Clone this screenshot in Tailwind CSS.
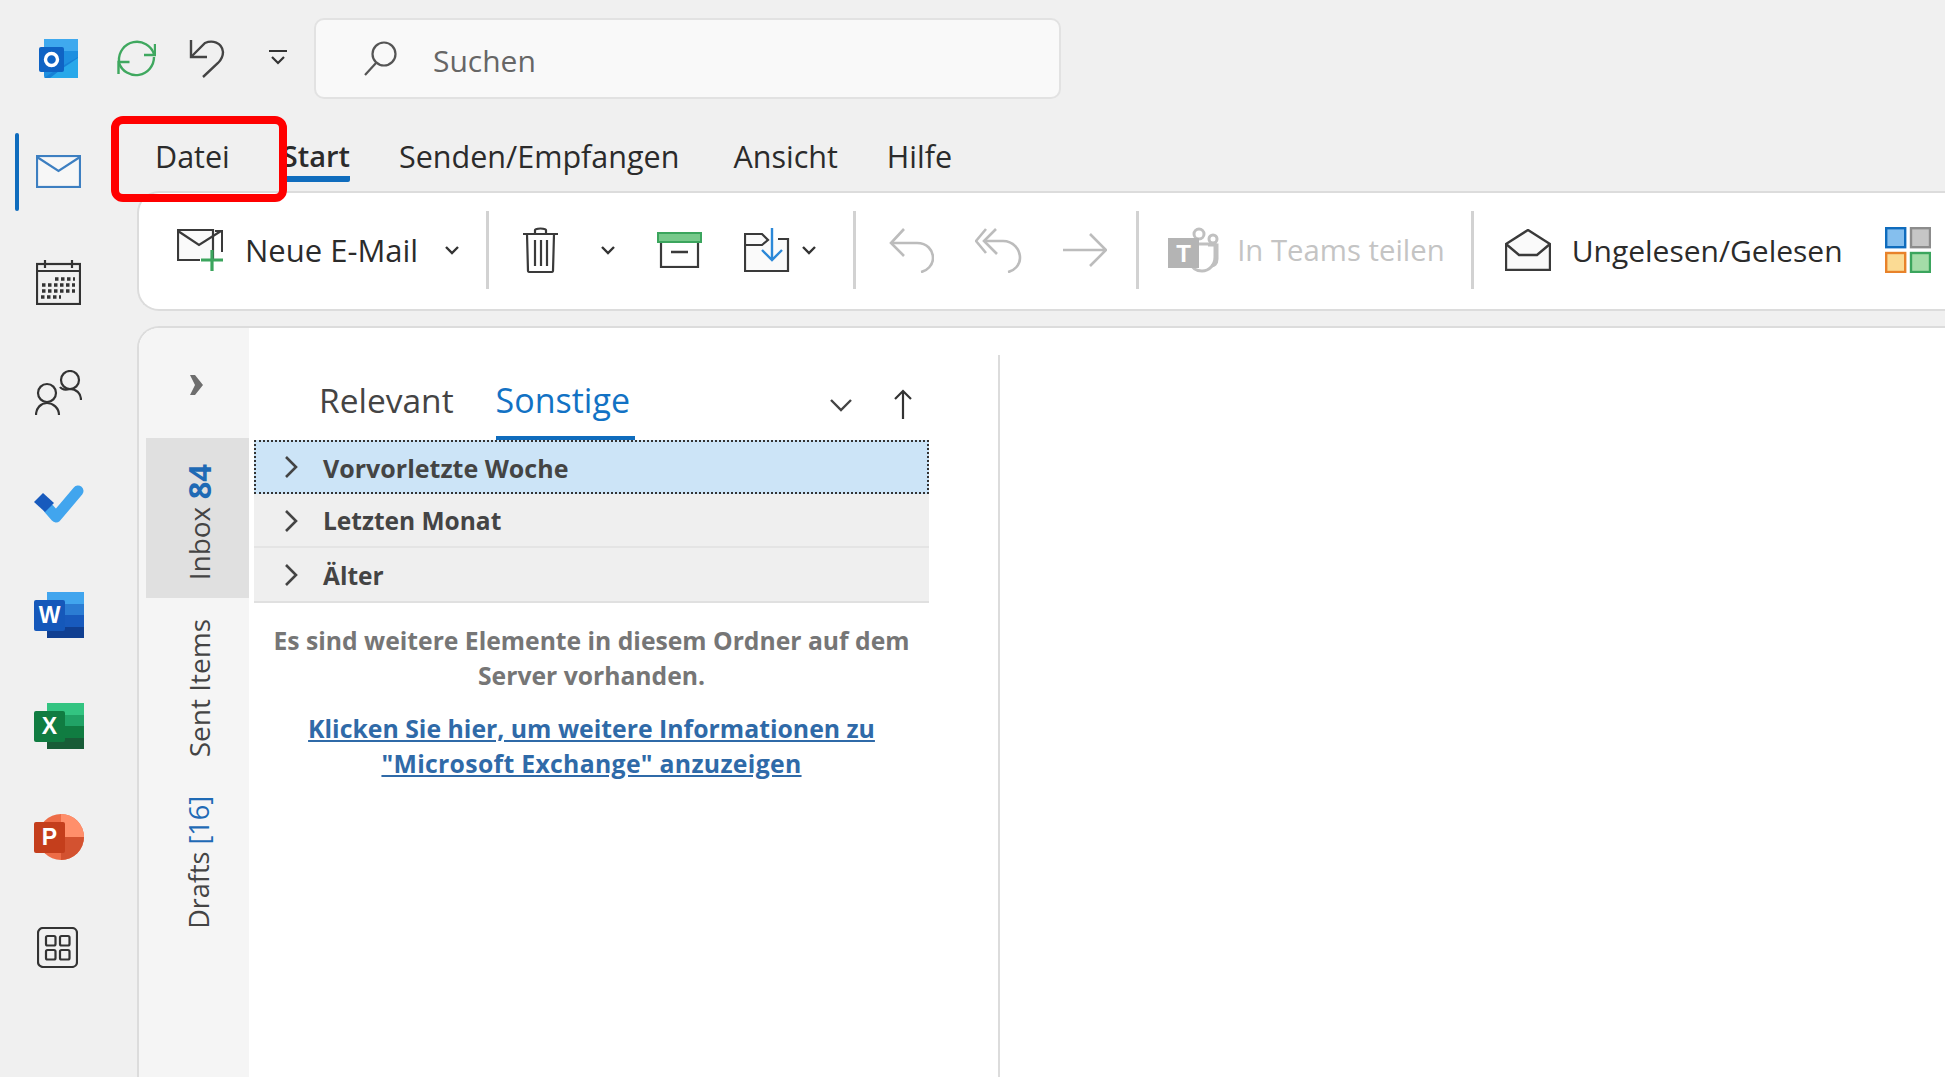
<!DOCTYPE html>
<html lang="de"><head><meta charset="utf-8">
<script src="https://cdn.jsdelivr.net/npm/@tailwindcss/browser@4"></script>
<title>Outlook</title></head>
<body class="m-0 h-[1077px] w-[1945px] overflow-hidden bg-[#f0f0f0] text-[#2b2b2b] font-['Open_Sans','Noto_Sans',sans-serif] relative">

<!-- title row -->
<header class="flex h-[110px] items-center pt-[6px]">
  <svg class="ml-[39px] w-[39px] h-[39px]" viewBox="0 0 39 39"><rect x="5" y="0" width="34" height="39" rx="2" fill="#1e8fe0"/><rect x="5" y="0" width="34" height="12" fill="#3fa9ee"/><path d="M5 39h34V18L20 29z" fill="#1680d6"/><path d="M11 39h28V19L24 29z" fill="#28a8ea"/><rect x="0" y="8" width="25" height="25" rx="2" fill="#0f63c4"/><circle cx="12.500" cy="20.500" r="6" fill="none" stroke="#fff" stroke-width="3.400"/></svg>
  <svg class="ml-[39px] w-[39px] h-[39px]" viewBox="0 0 39 39" fill="none" stroke="#3fa85f" stroke-width="2.400"><path d="M2 22A18 18 0 0 1 37 15"/><path d="M37 18A18 18 0 0 1 2 24"/><path d="M38 5v11H27M1.500 35V23h11"/></svg>
  <svg class="ml-[33px] w-[36px] h-[39px]" viewBox="0 0 36 39" fill="none" stroke="#444" stroke-width="2.400"><path d="M2 1v17h16"/><path d="M3 17 16 4c7-3 17-1 18 9 0 5-2 8-5 11L14 38"/></svg>
  <svg class="ml-[44px] w-[18px] h-[18px]" viewBox="0 0 18 18" fill="none" stroke="#333" stroke-width="2.200"><path d="M0 2h18M3 8l6 6 6-6"/></svg>
  <div class="ml-[27px] flex h-[81px] w-[747px] items-center rounded-[10px] border-2 border-[#e2e2e2] bg-[#f9f9f9] pl-[48px]">
    <svg class="w-[33px] h-[36px]" viewBox="0 0 33 36" fill="none" stroke="#555" stroke-width="2.200"><circle cx="20" cy="14" r="11.500"/><path d="M12 23 1 35"/></svg>
    <span class="ml-[36px] pt-[5px] text-[30px] text-[#666]">Suchen</span>
  </div>
</header>

<div class="flex h-[967px]">
  <!-- app rail -->
  <nav class="w-[137px] shrink-0 flex flex-col pt-[5px] relative">
    <div class="absolute left-[15px] top-[23px] h-[78px] w-[4px] rounded bg-[#0f6cbd]"></div>
    <div class="h-[111px] flex items-center justify-center pr-[20px] pt-[1px]"><svg class="w-[45px] h-[33px]" viewBox="0 0 45 33" fill="#f7f7f7" stroke="#3d7fc1" stroke-width="2.200"><rect x="1" y="1" width="43" height="31"/><path d="M1 2l21.500 14L44 2" fill="none"/></svg></div>
    <div class="h-[111px] flex items-center justify-center pr-[20px]"><svg class="w-[45px] h-[46px]" viewBox="0 0 45 46" fill="none" stroke="#333" stroke-width="2.200"><rect x="1" y="5" width="43" height="40"/><path d="M9 1v8M36 1v8M1 12h43" /><path stroke-width="3.500" stroke-dasharray="3.500 2.500" d="M19 20h20M6 26h33M6 32h33M5 38h20"/></svg></div>
    <div class="h-[111px] flex items-center justify-center pr-[20px]"><svg class="w-[47px] h-[46px]" viewBox="0 0 47 46" fill="none" stroke="#333" stroke-width="2.200"><circle cx="35" cy="10" r="9"/><path d="M25 17c2 3 6 3 10 2 6 0 11 4 11 11"/><circle cx="12" cy="23" r="9"/><path d="M1 45c0-7 5-12 11-12s12 5 12 12"/></svg></div>
    <div class="h-[111px] flex items-center justify-center pr-[20px]"><svg class="w-[50px] h-[40px]" viewBox="0 0 50 40"><path d="M15 25l7 8L44 7" fill="none" stroke="#41a5ee" stroke-width="11" stroke-linecap="round" stroke-linejoin="round"/><path d="M0 18 9 9l11 10-9 9z" fill="#185abd"/></svg></div>
    <div class="h-[111px] flex items-center justify-center pr-[20px]"><svg class="w-[50px] h-[46px]" viewBox="0 0 50 46"><rect x="13" y="0" width="37" height="46" rx="2" fill="#2b7cd3"/><rect x="13" y="0" width="37" height="12" fill="#41a5ee"/><rect x="13" y="23" width="37" height="12" fill="#185abd"/><rect x="13" y="35" width="37" height="11" fill="#103f91"/><rect x="0" y="8" width="31" height="31" rx="2" fill="#1558ba"/><text x="15.500" y="31" text-anchor="middle" font-family="Liberation Sans" font-weight="700" font-size="23" fill="#fff">W</text></svg></div>
    <div class="h-[111px] flex items-center justify-center pr-[20px]"><svg class="w-[50px] h-[46px]" viewBox="0 0 50 46"><rect x="13" y="0" width="37" height="46" rx="2" fill="#21a366"/><rect x="13" y="0" width="37" height="12" fill="#33c481"/><rect x="13" y="23" width="37" height="12" fill="#107c41"/><rect x="13" y="35" width="37" height="11" fill="#185c37"/><rect x="0" y="8" width="31" height="31" rx="2" fill="#107c41"/><text x="15.500" y="31" text-anchor="middle" font-family="Liberation Sans" font-weight="700" font-size="23" fill="#fff">X</text></svg></div>
    <div class="h-[111px] flex items-center justify-center pr-[20px]"><svg class="w-[50px] h-[46px]" viewBox="0 0 50 46"><circle cx="27" cy="23" r="23" fill="#ed6c47"/><path d="M27 0a23 23 0 0 1 23 23H27z" fill="#ff8f6b"/><path d="M27 23h23a23 23 0 0 1-23 23z" fill="#d35230"/><rect x="0" y="8" width="31" height="31" rx="2" fill="#c43e1c"/><text x="15.500" y="31" text-anchor="middle" font-family="Liberation Sans" font-weight="700" font-size="23" fill="#fff">P</text></svg></div>
    <div class="h-[111px] flex items-center justify-center pr-[22px]"><svg class="w-[41px] h-[41px]" viewBox="0 0 41 41" fill="none" stroke="#333" stroke-width="2.200"><rect x="1" y="1" width="39" height="39" rx="5"/><rect x="9" y="9" width="9.500" height="9.500" rx="1.500"/><rect x="23" y="9" width="9.500" height="9.500" rx="1.500"/><rect x="9" y="23" width="9.500" height="9.500" rx="1.500"/><rect x="23" y="23" width="9.500" height="9.500" rx="1.500"/></svg></div>
  </nav>

  <div class="flex-1 min-w-0 flex flex-col">
    <!-- tabs -->
    <div class="h-[81px] flex items-start pt-[27px] pl-[18px] text-[30.500px] leading-[38px] whitespace-nowrap">
      <span>Datei</span>
      <span class="ml-[52px] h-[45px] border-b-[6px] border-[#0f6cbd] rounded-b-[2px] text-[29px] font-semibold">Start</span>
      <span class="ml-[49px]">Senden/Empfangen</span>
      <span class="ml-[54px]">Ansicht</span>
      <span class="ml-[49px]">Hilfe</span>
    </div>
    <!-- ribbon -->
    <div class="h-[120px] flex items-center bg-white border-y-2 border-l-2 border-[#dcdcdc] rounded-l-[22px] pl-[38px] pb-[2px] text-[30px] whitespace-nowrap overflow-hidden shrink-0">
      <svg class="w-[48px] h-[42px] shrink-0" viewBox="0 0 48 42" fill="none"><path d="M36 30V1H1v30h22" fill="#fafafa" stroke="#3a3a3a" stroke-width="2.200"/><path d="M1 2l21 14 22-14" stroke="#3a3a3a" stroke-width="2.200"/><rect x="38" y="1" width="8" height="2" fill="#3a3a3a"/><rect x="44" y="1" width="2" height="22" fill="#3a3a3a"/><path d="M35 21v21M24 31h22" stroke="#3ba55d" stroke-width="3.200"/></svg>
      <span class="ml-[20px] text-[31px]">Neue E-Mail</span>
      <svg class="ml-[27px] w-[14px] h-[9px] shrink-0" viewBox="0 0 14 9" fill="none" stroke="#333" stroke-width="2.400"><path d="M1 1l6 6 6-6"/></svg>
      <div class="ml-[27px] h-[78px] w-[3px] bg-[#d2d2d2] shrink-0"></div>
      <svg class="ml-[33px] w-[37px] h-[46px] shrink-0" viewBox="0 0 37 46" fill="none" stroke="#3a3a3a" stroke-width="2.200"><path d="M1 7h35M13 7V3c0-2 11-2 11 0v4M5 7l1 37c0 1 1 1 2 1h21c1 0 2 0 2-1l1-37"/><path d="M13 13v26M19 13v26M25 13v26"/></svg>
      <svg class="ml-[42px] w-[14px] h-[9px] shrink-0" viewBox="0 0 14 9" fill="none" stroke="#333" stroke-width="2.400"><path d="M1 1l6 6 6-6"/></svg>
      <svg class="ml-[42px] w-[45px] h-[36px] shrink-0" viewBox="0 0 45 36" fill="none"><rect x="4" y="9" width="37" height="26" fill="#fff" stroke="#3a3a3a" stroke-width="2.200"/><rect x="1" y="1" width="43" height="9" fill="#77c98b" stroke="#3ba55d" stroke-width="2"/><path d="M14 20h17" stroke="#3a3a3a" stroke-width="2.600"/></svg>
      <svg class="ml-[42px] w-[46px] h-[44px] shrink-0" viewBox="0 0 46 44" fill="none"><path d="M34 11h10v32H1V6h17l6 6-6 5H1" fill="#fafafa" stroke="#3a3a3a" stroke-width="2.200"/><path d="M28 0v31M18 22l10 10 10-10" stroke="#2b88d8" stroke-width="2.400"/></svg>
      <svg class="ml-[12px] w-[14px] h-[9px] shrink-0" viewBox="0 0 14 9" fill="none" stroke="#333" stroke-width="2.400"><path d="M1 1l6 6 6-6"/></svg>
      <div class="ml-[37px] h-[78px] w-[3px] bg-[#d2d2d2] shrink-0"></div>
      <svg class="ml-[33px] w-[45px] h-[46px] shrink-0" viewBox="0 0 45 46" fill="none" stroke="#bcbcbc" stroke-width="2.600"><path d="M15 2 2 16l13 13"/><path d="M2 16h26c10 0 16 7 16 15 0 7-6 13-12 14"/></svg>
      <svg class="ml-[41px] w-[47px] h-[46px] shrink-0" viewBox="0 0 47 46" fill="none" stroke="#bcbcbc" stroke-width="2.600"><path d="M11 2 1 14l10 12M21 2 9 14l13 13"/><path d="M9 14h19c10 0 17 8 17 17 0 7-6 13-12 14"/></svg>
      <svg class="ml-[41px] w-[44px] h-[34px] shrink-0" viewBox="0 0 44 34" fill="none" stroke="#bcbcbc" stroke-width="2.600"><path d="M0 17h42M27 1l16 16-16 16"/></svg>
      <div class="ml-[29px] h-[78px] w-[3px] bg-[#d2d2d2] shrink-0"></div>
      <svg class="ml-[29px] w-[51px] h-[46px] shrink-0" viewBox="0 0 51 46"><g fill="none" stroke="#c0c0c0" stroke-width="3"><circle cx="31" cy="7" r="5"/><circle cx="45" cy="12" r="4"/><path d="M21 17h26v13c0 8-6 14-13 14-6 0-10-3-12-8"/><path d="M40 18h9v14c0 5-3 7-6 7"/></g><rect x="0" y="11" width="31" height="30" fill="#b4b4b4"/><text x="15.500" y="35" text-anchor="middle" font-family="Liberation Sans" font-weight="700" font-size="24" fill="#fff">T</text></svg>
      <span class="ml-[18px] pt-[1px] text-[29.300px] text-[#c4c4c4]">In Teams teilen</span>
      <div class="ml-[26px] h-[78px] w-[3px] bg-[#d2d2d2] shrink-0"></div>
      <svg class="ml-[31px] w-[46px] h-[42px] shrink-0" viewBox="0 0 46 42" fill="none" stroke="#3a3a3a" stroke-width="2.400"><path d="M1 41V15L23 1l22 14v26z" fill="#fafafa"/><path d="M1 15l13 11h18l13-11"/></svg>
      <span class="ml-[21px]">Ungelesen/Gelesen</span>
      <svg class="ml-[42px] w-[46px] h-[46px] shrink-0" viewBox="0 0 46 46" stroke-width="2.400"><rect x="1.200" y="1.200" width="19" height="19" fill="#85bfee" stroke="#0f6cbd"/><rect x="26" y="1.200" width="19" height="19" fill="#c6c6c6" stroke="#8c8c8c"/><rect x="1.200" y="26" width="19" height="19" fill="#fbdb94" stroke="#e8822a"/><rect x="26" y="26" width="19" height="19" fill="#a4dca8" stroke="#3ba55d"/></svg>
    </div>

    <!-- content panel -->
    <div class="mt-[15px] flex-1 min-h-0 flex bg-white border-t-2 border-l-2 border-[#dcdcdc] rounded-tl-[22px] overflow-hidden">
      <!-- vertical folders -->
      <aside class="w-[110px] shrink-0 bg-[#f5f5f5] flex flex-col text-[28px] text-[#444]">
        <div class="h-[110px] pl-[50px] flex items-center pt-[4px]"><svg class="w-[14px] h-[20px]" viewBox="0 0 14 20" fill="#6e6e6e"><path d="M1 0h5l8 10-8 10H1l5-10z"/></svg></div>
        <div class="ml-[7px] h-[160px] bg-[#e0e0e0] flex justify-center items-end pl-[2px] pb-[18px]">
          <span class="[writing-mode:vertical-rl] rotate-180 leading-[34px] whitespace-nowrap">Inbox <b class="ml-[14px] text-[31px] font-bold text-[#1f6ab5]">84</b></span>
        </div>
        <div class="ml-[7px] mt-[21px] flex justify-center pl-[2px]">
          <span class="[writing-mode:vertical-rl] rotate-180 leading-[34px] whitespace-nowrap">Sent Items</span>
        </div>
        <div class="ml-[7px] mt-[39px] flex justify-center pl-[2px]">
          <span class="[writing-mode:vertical-rl] rotate-180 text-[27px] leading-[34px] whitespace-nowrap">Drafts <span class="text-[#1f6ab5]">[16]</span></span>
        </div>
      </aside>
      <!-- message list -->
      <section class="w-[751px] shrink-0 border-r-2 border-[#dcdcdc] mt-[27px] pl-[5px]">
        <div class="h-[85px] w-[675px] relative flex items-start pl-[65px] pt-[24px] leading-[42px]">
          <span class="text-[33.500px] text-[#444]">Relevant</span>
          <span class="ml-[42px] h-[61px] border-b-[4px] border-[#0f6cbd] pr-[5px] text-[34px] text-[#1272c4]">Sonstige</span>
          <svg class="absolute left-[576px] top-[44px] w-[22px] h-[13px]" viewBox="0 0 22 13" fill="none" stroke="#444" stroke-width="2.400"><path d="M1 1l10 10L21 1"/></svg>
          <svg class="absolute left-[640px] top-[34px] w-[18px] h-[30px]" viewBox="0 0 18 30" fill="none" stroke="#333" stroke-width="2.200"><path d="M9 30V2M1 10l8-8 8 8"/></svg>
        </div>
        <div class="w-[675px] text-[24.500px] font-bold text-[#444]">
          <div class="h-[54px] flex items-center pl-[29px] pt-[3px] bg-[#cce4f7] border-2 border-dotted border-[#333]"><svg class="w-[13px] h-[22px] shrink-0 -mt-[4px]" viewBox="0 0 13 22" fill="none" stroke="#444" stroke-width="2.600"><path d="M1 1l10 10L1 21"/></svg><span class="ml-[25px] text-[25px]">Vorvorletzte Woche</span></div>
          <div class="h-[54px] flex items-center pl-[31px] pt-[3px] bg-[#efefef] border-b-2 border-[#e4e4e4]"><svg class="w-[13px] h-[22px] shrink-0 -mt-[2px]" viewBox="0 0 13 22" fill="none" stroke="#444" stroke-width="2.600"><path d="M1 1l10 10L1 21"/></svg><span class="ml-[25px]">Letzten Monat</span></div>
          <div class="h-[55px] flex items-center pl-[31px] pt-[3px] bg-[#efefef] border-b-2 border-[#e0e0e0]"><svg class="w-[13px] h-[22px] shrink-0 -mt-[2px]" viewBox="0 0 13 22" fill="none" stroke="#444" stroke-width="2.600"><path d="M1 1l10 10L1 21"/></svg><span class="ml-[25px]">Älter</span></div>
          <p class="mt-[21px] text-center text-[24.700px] leading-[34.500px] text-[#767676]">Es sind weitere Elemente in diesem Ordner auf dem<br>Server vorhanden.</p>
          <p class="mt-[18px] text-center text-[24.800px] leading-[34.500px] text-[#2f6aa8] underline">Klicken Sie hier, um weitere Informationen zu<br><span class="tracking-[0.300px]">"Microsoft Exchange" anzuzeigen</span></p>
        </div>
      </section>
      <div class="flex-1"></div>
    </div>
  </div>
</div>

<!-- red annotation -->
<div class="absolute left-[111px] top-[116px] w-[176px] h-[86px] rounded-[12px] border-[8px] border-[#ff0000]"></div>
</body></html>
